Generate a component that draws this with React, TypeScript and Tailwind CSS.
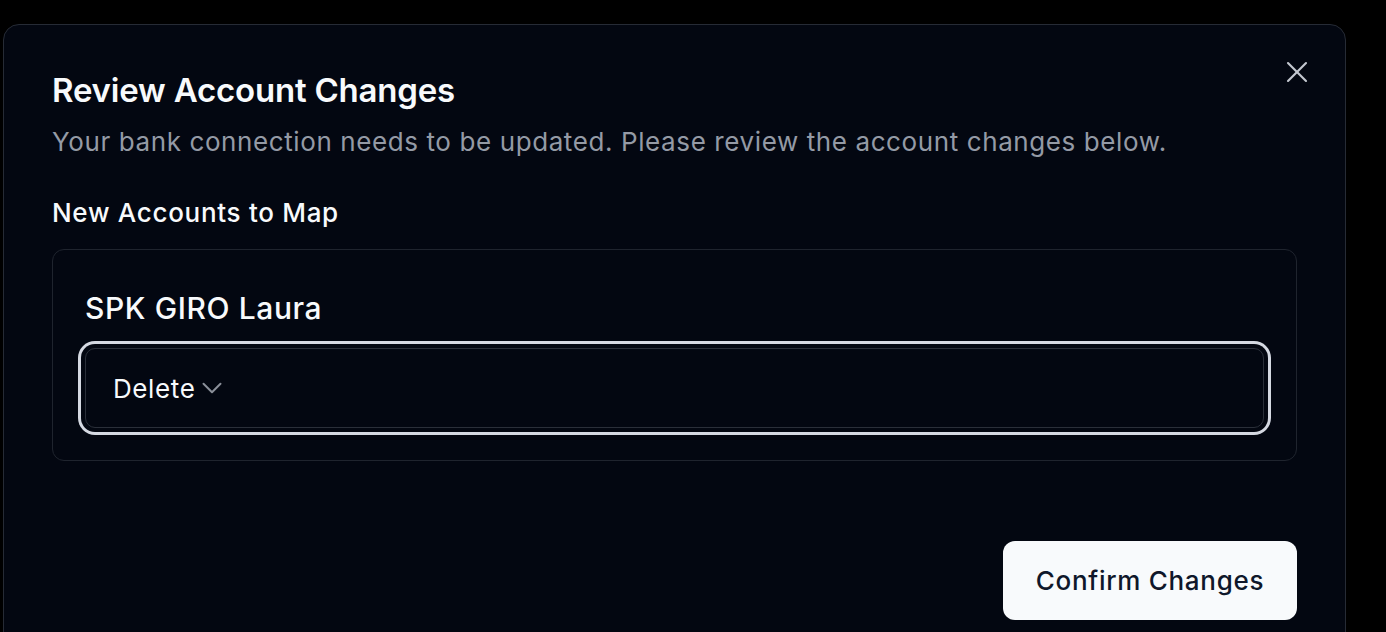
import { ChevronDown, X } from "lucide-react";

function AccountMapping({ name, action }: { name: string; action: string }) {
  return (
    <div className="rounded-[12px] border-[1.5px] border-[#1f242e] px-[32px] pt-[40px] pb-[32px]">
      <div className="text-[30px] leading-[36px] font-medium tracking-[0.6px] text-[#f8fafc]">{name}</div>
      <button className="mt-[22px] flex h-[80px] w-full items-center rounded-[10px] border-[1.5px] border-[#2a2f39] bg-[#030711] pl-[27px] text-[26px] tracking-[0.6px] text-[#f8fafc] ring-[3px] ring-[#d5d9e2] ring-offset-[4px] ring-offset-[#030711]">
        <span>{action}</span>
        <ChevronDown size={34} strokeWidth={1.4} className="text-[#8a8f99]" />
      </button>
    </div>
  );
}

function App() {
  return (
    <main
      className="h-[632px] overflow-hidden bg-black pl-[3px] pt-[24px]"
      style={{ fontFamily: "Inter, 'Noto Sans', sans-serif" }}
    >
      <div className="relative w-[1343px] rounded-t-[16px] border-[1.5px] border-[#262b35] bg-[#030711] px-[48px] pt-[45px] pb-[48px]">
        <button className="absolute right-[30px] top-[29px] text-[#c4c8d0]">
          <X size={36} strokeWidth={1.4} />
        </button>

        <h2 className="text-[33px] leading-[40px] font-semibold tracking-[-0.2px] text-[#f8fafc]">
          Review Account Changes
        </h2>
        <p className="mt-[14px] text-[26px] leading-[36px] tracking-[0.6px] text-[#949aa5]">
          Your bank connection needs to be updated. Please review the account changes below.
        </p>

        <div className="mt-[35px] text-[26px] leading-[36px] font-medium tracking-[0.7px] text-[#f8fafc]">
          New Accounts to Map
        </div>
        <div className="mt-[18px]">
          <AccountMapping name="SPK GIRO Laura" action="Delete" />
        </div>

        <div className="mt-[80px] flex justify-end">
          <button className="h-[79px] w-[294px] rounded-[12px] bg-[#f8fafc] text-[26px] font-medium tracking-[0.7px] text-[#0f172a]">
            Confirm Changes
          </button>
        </div>
      </div>
    </main>
  );
}

export default App;
